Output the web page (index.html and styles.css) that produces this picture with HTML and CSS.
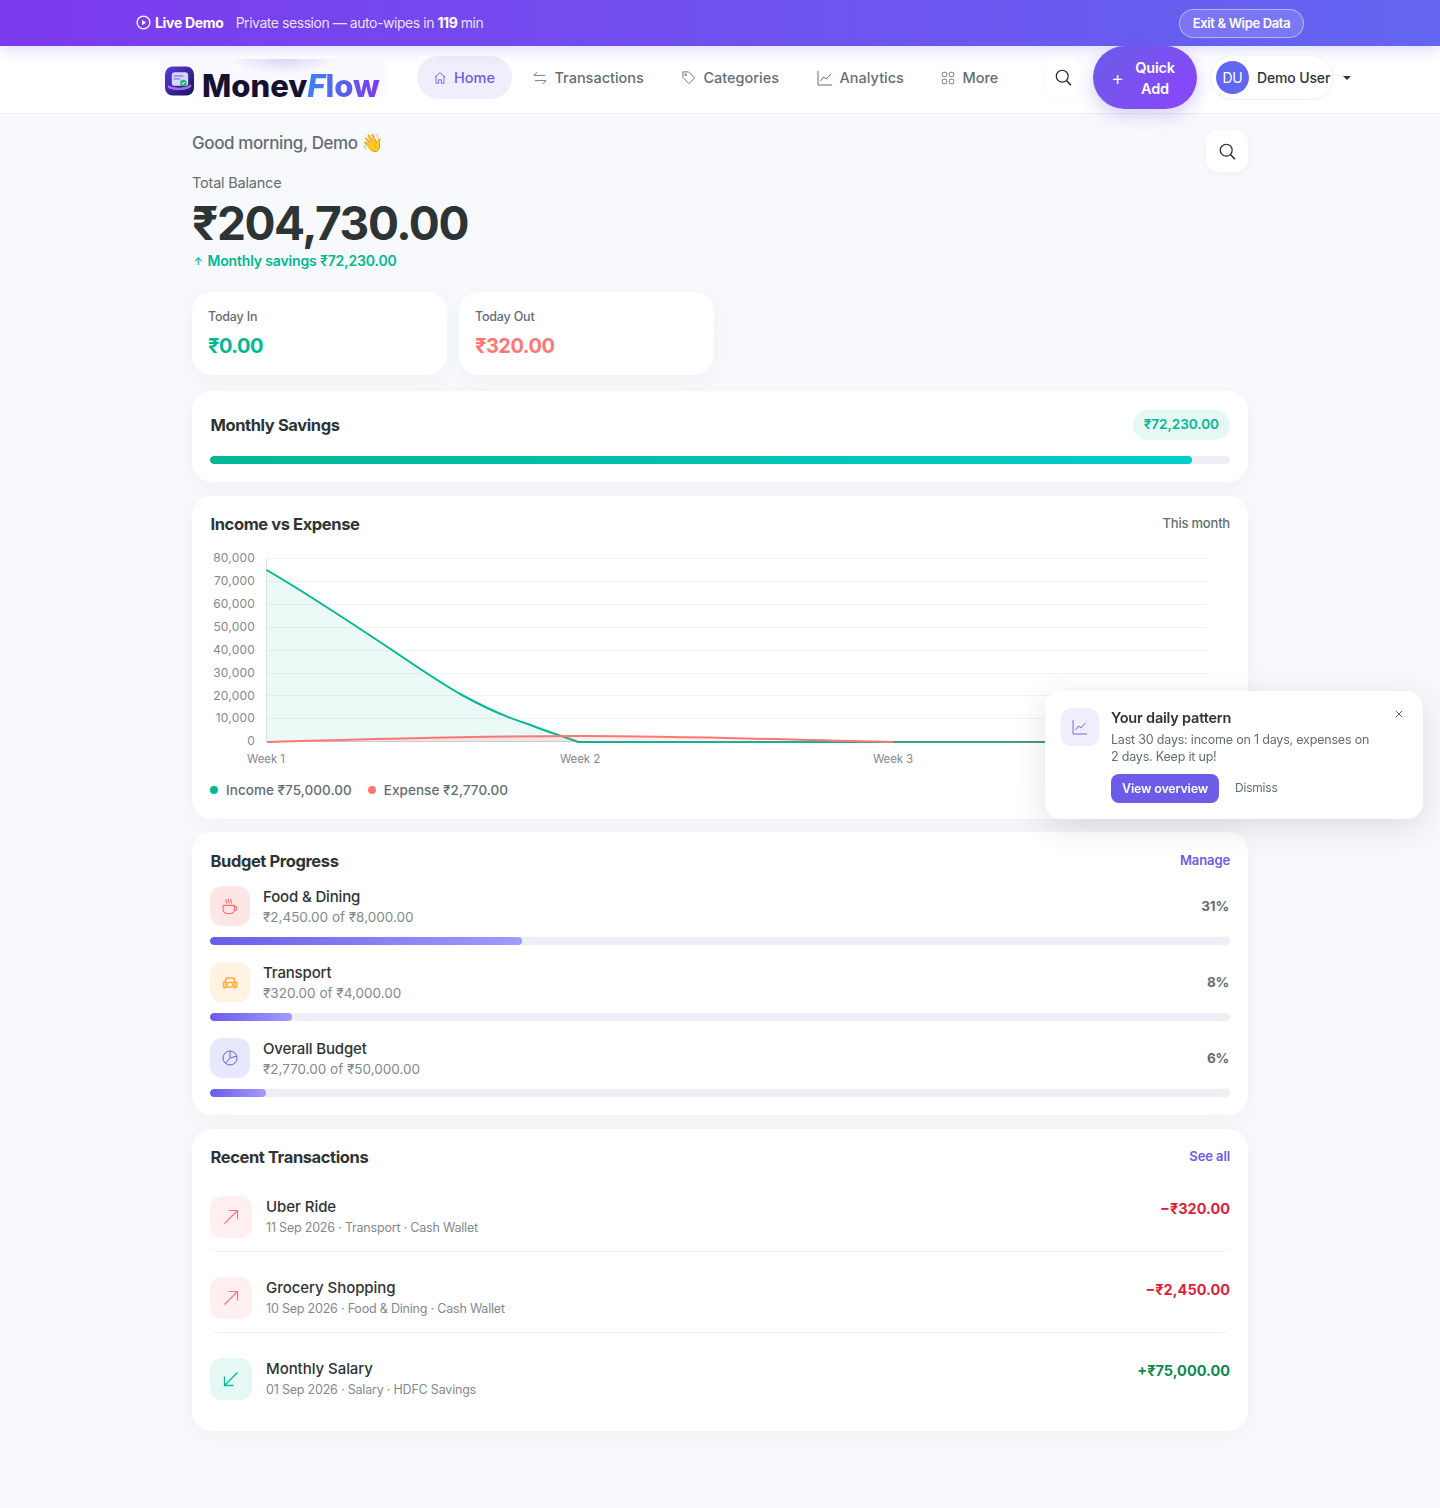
FILE: index.html
```html
<!DOCTYPE html>
<html lang="en">
<head>
    <meta charset="UTF-8">
    <meta name="viewport" content="width=device-width, initial-scale=1.0">
    <title>MoneyFlow</title>
    <link rel="stylesheet" href="styles.css">
</head>
<body>
    <div class="demo-bar">
        <div class="demo-left">
            <svg class="demo-play" viewBox="0 0 16 16" width="15" height="15" fill="none" stroke="#fff" stroke-width="1.4"><circle cx="8" cy="8" r="6.8"/><path d="M6.5 5.2 10.8 8l-4.3 2.8z" fill="#fff" stroke="none"/></svg>
            <strong class="demo-title">Live Demo</strong>
            <span class="demo-text">Private session — auto-wipes in <b>119</b> min</span>
        </div>
        <button class="demo-exit">Exit &amp; Wipe Data</button>
    </div>

    <nav class="topnav">
        <div class="logo">
            <svg class="logo-mark" viewBox="0 0 30 30" width="29" height="30">
                <defs>
                    <linearGradient id="logoBg" x1="0" y1="0" x2="1" y2="1"><stop offset="0" stop-color="#5a3be0"/><stop offset="1" stop-color="#1a1458"/></linearGradient>
                </defs>
                <rect width="30" height="30" rx="8" fill="url(#logoBg)"/>
                <path d="M3 19c4 4 18 4 24-1v3c-3 4-19 5-24 1z" fill="#a36bf0"/>
                <rect x="7" y="6" width="17" height="14" rx="3" fill="#d9d6fb"/>
                <rect x="9" y="9" width="10" height="1.6" fill="#8f86ea"/>
                <rect x="9" y="12" width="7" height="1.6" fill="#8f86ea"/>
                <circle cx="19" cy="17" r="3.4" fill="#22b573"/>
                <path d="M17.4 17l1.2 1.2 2-2.2" stroke="#fff" stroke-width="1" fill="none"/>
            </svg>
            <div class="logo-word">Monev<span class="logo-flow"><i>F</i>low</span></div>
        </div>

        <ul class="nav-links">
            <li class="nav-item active">
                <svg viewBox="0 0 16 16" width="14" height="14" fill="none" stroke="currentColor" stroke-width="1"><path d="M2 7 8 2l6 5M3.500 6v8h3V10h3v4h3V6"/></svg>
                Home
            </li>
            <li class="nav-item">
                <svg viewBox="0 0 16 16" width="14" height="14" fill="none" stroke="currentColor" stroke-width="1"><path d="M1 5h13M5 1 1 5M15 11H2M11 15l4-4"/></svg>
                Transactions
            </li>
            <li class="nav-item">
                <svg viewBox="0 0 16 16" width="15" height="15" fill="none" stroke="currentColor" stroke-width="1"><path d="M2 2h6l6.500 6.500-6 6L2 8z"/><circle cx="5" cy="5" r="1"/></svg>
                Categories
            </li>
            <li class="nav-item">
                <svg viewBox="0 0 16 16" width="16" height="16" fill="none" stroke="currentColor" stroke-width="1"><path d="M1 1v14h14M3.500 11l3-4 3 2 4.500-5"/></svg>
                Analytics
            </li>
            <li class="nav-item">
                <svg viewBox="0 0 16 16" width="14" height="14" fill="none" stroke="currentColor" stroke-width="1"><rect x="1.500" y="1.500" width="5" height="5" rx="1"/><rect x="9.500" y="1.500" width="5" height="5" rx="1"/><rect x="1.500" y="9.500" width="5" height="5" rx="1"/><rect x="9.500" y="9.500" width="5" height="5" rx="1"/></svg>
                More
            </li>
        </ul>

        <div class="nav-right">
            <button class="icon-btn nav-search">
                <svg viewBox="0 0 16 16" width="17" height="17" fill="none" stroke="#212529" stroke-width="1.1"><circle cx="6.800" cy="6.800" r="5.600"/><path d="m11 11 4 4.300" stroke-width="1.400"/></svg>
            </button>
            <button class="quick-add">
                <span class="quick-plus">+</span>
                <span class="quick-label">Quick<br>Add</span>
            </button>
            <div class="user-pill">
                <span class="user-avatar">DU</span>
                <span class="user-name">Demo User</span>
            </div>
            <span class="caret"></span>
        </div>
    </nav>

    <main class="page">
        <div class="hero">
            <div>
                <p class="greeting">Good morning, Demo <span class="wave">👋</span></p>
                <p class="balance-label">Total Balance</p>
                <div class="balance">₹204,730.00</div>
                <p class="savings-note"><span class="up-arrow">↑</span> Monthly savings ₹72,230.00</p>
            </div>
            <button class="icon-btn hero-search">
                <svg viewBox="0 0 16 16" width="17" height="17" fill="none" stroke="#212529" stroke-width="1.1"><circle cx="6.800" cy="6.800" r="5.600"/><path d="m11 11 4 4.300" stroke-width="1.400"/></svg>
            </button>
        </div>

        <div class="today-row">
            <div class="card today-card">
                <div class="today-label">Today In</div>
                <div class="today-value green">₹0.00</div>
            </div>
            <div class="card today-card">
                <div class="today-label">Today Out</div>
                <div class="today-value coral">₹320.00</div>
            </div>
        </div>

        <section class="card savings-card">
            <div class="card-head">
                <h2>Monthly Savings</h2>
                <span class="savings-badge">₹72,230.00</span>
            </div>
            <div class="bar"><div class="bar-fill teal" style="width: 96.300%"></div></div>
        </section>

        <section class="card chart-card">
            <div class="card-head">
                <h2>Income vs Expense</h2>
                <span class="muted-link">This month</span>
            </div>
            <svg class="chart" viewBox="0 -4 1020 229" width="1020" height="229">
                <g class="grid">
                    <path d="M57 6.500H997M57 29.500H997M57 52.500H997M57 75.500H997M57 98.500H997M57 121.500H997M57 143.500H997M57 166.500H997"/>
                </g>
                <path d="M56.500 6V190" stroke="#dfe5e6" fill="none"/>
                <path d="M56.500 18C95 40 140 70 185 100 210 117 232 132 252 143 272 154 295 165 318 172 335 179 352 184 368 190H56.500Z" fill="#00b894" fill-opacity=".08"/>
                <path d="M57 189.500H997" stroke="#cfd3d6" fill="none"/>
                <path d="M56.500 18C95 40 140 70 185 100 210 117 232 132 252 143 272 154 295 165 318 172 335 179 352 184 368 190H997" stroke="#00b894" stroke-width="2" fill="none"/>
                <path d="M57 190C160 187 260 184 370 184 480 184 580 188 683 190V190H57Z" fill="#ff7675" fill-opacity=".12"/>
                <path d="M57 190C160 187 260 184 370 184 480 184 580 188 683 190" stroke="#ff7675" stroke-width="2" fill="none"/>
                <path d="M683 190H997" stroke="#3f9b86" stroke-width="2" fill="none"/>
                <g class="chart-y">
                    <text x="45" y="10">80,000</text>
                    <text x="45" y="33">70,000</text>
                    <text x="45" y="56">60,000</text>
                    <text x="45" y="79">50,000</text>
                    <text x="45" y="102">40,000</text>
                    <text x="45" y="125">30,000</text>
                    <text x="45" y="148">20,000</text>
                    <text x="45" y="170">10,000</text>
                    <text x="45" y="193">0</text>
                </g>
                <g class="chart-x">
                    <text x="56" y="211">Week 1</text>
                    <text x="370" y="211">Week 2</text>
                    <text x="683" y="211">Week 3</text>
                </g>
            </svg>
            <div class="legend">
                <span class="legend-item"><i class="dot dot-green"></i>Income ₹75,000.00</span>
                <span class="legend-item"><i class="dot dot-red"></i>Expense ₹2,770.00</span>
            </div>
        </section>

        <section class="card budget-card">
            <div class="card-head">
                <h2>Budget Progress</h2>
                <a class="card-link">Manage</a>
            </div>

            <div class="budget-item">
                <div class="budget-row">
                    <div class="budget-icon icon-red">
                        <svg viewBox="0 0 16 16" width="20" height="20" fill="none" stroke="#ff6b6b" stroke-width=".85"><path d="M2.500 7.500h9v3.500a3 3 0 0 1-3 3h-3a3 3 0 0 1-3-3zM11.500 8.500h1.200l1 1.500-1 1.500h-1.200M5 2.500q-.6 1 0 2t0 1.500M7 2.500q-.6 1 0 2t0 1.500M9 2.500q-.6 1 0 2t0 1.500"/></svg>
                    </div>
                    <div class="budget-text">
                        <div class="budget-name">Food &amp; Dining</div>
                        <div class="budget-sub">₹2,450.00 of ₹8,000.00</div>
                    </div>
                    <div class="budget-pct">31%</div>
                </div>
                <div class="bar bar-budget"><div class="bar-fill purple" style="width: 30.600%"></div></div>
            </div>

            <div class="budget-item">
                <div class="budget-row">
                    <div class="budget-icon icon-orange">
                        <svg viewBox="0 0 16 16" width="16" height="16" fill="none" stroke="#fdab3d" stroke-width="1.500"><path d="M1.500 8.500h13V13h-13zM3 8l1.300-4h7.400L13 8M3 13v1.500M13 13v1.500"/><circle cx="4.500" cy="10.700" r=".7" fill="#fdab3d"/><circle cx="11.500" cy="10.700" r=".7" fill="#fdab3d"/></svg>
                    </div>
                    <div class="budget-text">
                        <div class="budget-name">Transport</div>
                        <div class="budget-sub">₹320.00 of ₹4,000.00</div>
                    </div>
                    <div class="budget-pct">8%</div>
                </div>
                <div class="bar bar-budget"><div class="bar-fill purple" style="width: 8%"></div></div>
            </div>

            <div class="budget-item">
                <div class="budget-row">
                    <div class="budget-icon icon-indigo">
                        <svg viewBox="0 0 16 16" width="16" height="16" fill="none" stroke="#6c5ce7" stroke-width="1"><circle cx="8" cy="8" r="7"/><path d="M8 1v7l6.400 -1.800M8 8l-4.500 5.300"/></svg>
                    </div>
                    <div class="budget-text">
                        <div class="budget-name">Overall Budget</div>
                        <div class="budget-sub">₹2,770.00 of ₹50,000.00</div>
                    </div>
                    <div class="budget-pct">6%</div>
                </div>
                <div class="bar bar-budget"><div class="bar-fill purple" style="width: 5.500%"></div></div>
            </div>
        </section>

        <section class="card recent-card">
            <div class="card-head">
                <h2>Recent Transactions</h2>
                <a class="card-link">See all</a>
            </div>

            <div class="txn-list">
                <div class="txn">
                    <div class="txn-icon txn-out">
                        <svg viewBox="0 0 16 16" width="16" height="16" fill="none" stroke="#ff7675" stroke-width="1.200"><path d="M1.500 14.500 14.500 1.500M5.500 1.500h9v9"/></svg>
                    </div>
                    <div class="txn-text">
                        <div class="txn-name">Uber Ride</div>
                        <div class="txn-sub">11 Sep 2026 · Transport · Cash Wallet</div>
                    </div>
                    <div class="txn-amount amount-out">−₹320.00</div>
                </div>

                <div class="txn">
                    <div class="txn-icon txn-out">
                        <svg viewBox="0 0 16 16" width="16" height="16" fill="none" stroke="#ff7675" stroke-width="1.200"><path d="M1.500 14.500 14.500 1.500M5.500 1.500h9v9"/></svg>
                    </div>
                    <div class="txn-text">
                        <div class="txn-name">Grocery Shopping</div>
                        <div class="txn-sub">10 Sep 2026 · Food &amp; Dining · Cash Wallet</div>
                    </div>
                    <div class="txn-amount amount-out">−₹2,450.00</div>
                </div>

                <div class="txn">
                    <div class="txn-icon txn-in">
                        <svg viewBox="0 0 16 16" width="16" height="16" fill="none" stroke="#00b894" stroke-width="1.300"><path d="M14.500 1.500 1.500 14.500M10.500 14.500h-9v-9"/></svg>
                    </div>
                    <div class="txn-text">
                        <div class="txn-name">Monthly Salary</div>
                        <div class="txn-sub">01 Sep 2026 · Salary · HDFC Savings</div>
                    </div>
                    <div class="txn-amount amount-in">+₹75,000.00</div>
                </div>
            </div>
        </section>
    </main>

    <aside class="insight">
        <div class="insight-icon">
            <svg viewBox="0 0 16 16" width="16" height="16" fill="none" stroke="#6c5ce7" stroke-width=".9"><path d="M1 1v14h14M3.500 11l3-4 2.500 2 4.500-5"/></svg>
        </div>
        <div class="insight-body">
            <h3>Your daily pattern</h3>
            <p>Last 30 days: income on 1 days, expenses on 2 days. Keep it up!</p>
            <div class="insight-actions">
                <button class="btn-view">View overview</button>
                <button class="btn-dismiss">Dismiss</button>
            </div>
        </div>
        <svg class="insight-close" viewBox="0 0 10 10" width="8" height="8" fill="none" stroke="#495057" stroke-width="1.100"><path d="M1 1l8 8M9 1 1 9"/></svg>
    </aside>
</body>
</html>
```

FILE: styles.css
```css
* {
    box-sizing: border-box;
}
body {
    margin: 0;
    background: #f8f9fc;
    color: #2d3436;
    font-family: Inter, "Noto Sans", sans-serif;
    letter-spacing: -0.2px;
}
button {
    font-family: inherit;
    letter-spacing: inherit;
}
h2, h3, p {
    margin: 0;
}

/* demo bar */
.demo-bar {
    height: 46px;
    display: flex;
    align-items: center;
    justify-content: space-between;
    padding: 0 136px;
    background: linear-gradient(90deg, #7c3aed, #6366f1);
    color: #fff;
    position: relative;
    z-index: 2;
    box-shadow: 0 4px 14px rgba(99, 102, 241, 0.22);
}
.demo-left {
    display: flex;
    align-items: center;
    font-size: 14px;
    margin-top: -2px;
}
.demo-play {
    margin-right: 4px;
}
.demo-title {
    font-weight: 700;
    margin-right: 12px;
    letter-spacing: -0.3px;
}
.demo-text {
    color: rgba(255, 255, 255, 0.86);
    letter-spacing: -0.45px;
}
.demo-text b {
    color: #fff;
}
.demo-exit {
    height: 29px;
    width: 125px;
    border-radius: 15px;
    border: 1px solid rgba(255, 255, 255, 0.45);
    background: rgba(255, 255, 255, 0.14);
    color: #fff;
    font-size: 13px;
    font-weight: 600;
    letter-spacing: -0.35px;
    padding: 0;
}

/* top nav */
.topnav {
    height: 68px;
    display: flex;
    align-items: center;
    background: #fff;
    border-bottom: 1px solid #eceef3;
    padding: 0 89px 4px 160px;
}
.logo {
    width: 225px;
    height: 38px;
    padding: 7px 0 0 5px;
    display: flex;
    align-items: flex-start;
    gap: 8px;
    background: radial-gradient(ellipse 50px 16px at 123px 0, #dcd8f8, rgba(220, 216, 248, 0) 100%), #faf9ff;
}
.logo-mark {
    flex: none;
}
.logo-word {
    font-size: 31px;
    line-height: 38px;
    font-weight: 800;
    color: #14122e;
    letter-spacing: 0;
    white-space: nowrap;
    margin-top: 1px;
}
.logo-flow {
    background: linear-gradient(90deg, #3b82f6, #7c3aed);
    -webkit-background-clip: text;
    background-clip: text;
    color: transparent;
}
.logo-flow i {
    font-style: italic;
}
.nav-links {
    list-style: none;
    display: flex;
    align-items: center;
    margin: 0 0 0 32px;
    padding: 0;
    gap: 5.500px;
    height: 43px;
}
.nav-item {
    display: flex;
    align-items: center;
    gap: 7px;
    height: 43px;
    padding: 0 16px;
    font-size: 14.500px;
    font-weight: 500;
    color: #636e72;
    letter-spacing: 0;
}
.nav-item.active {
    background: #f0edfd;
    color: #6c5ce7;
    border-radius: 22px;
    padding-right: 17px;
}
.nav-right {
    display: flex;
    align-items: center;
    margin-left: auto;
    height: 63px;
    position: relative;
    z-index: 3;
}
.icon-btn {
    background: #fff;
    border: none;
    border-radius: 12px;
    display: flex;
    align-items: center;
    justify-content: center;
    padding: 0;
}
.nav-search {
    width: 36px;
    height: 42px;
    box-shadow: 0 1px 6px rgba(0, 0, 0, 0.03);
}
.quick-add {
    width: 104px;
    height: 63px;
    margin-left: 12px;
    border: none;
    border-radius: 32px;
    background: linear-gradient(135deg, #6c5ce7, #8b45fb);
    color: #fff;
    display: flex;
    align-items: center;
    box-shadow: 0 6px 18px rgba(108, 92, 231, 0.3);
    padding: 0 0 0 18px;
}
.quick-plus {
    font-size: 20px;
    font-weight: 300;
    line-height: 20px;
    width: 13px;
}
.quick-label {
    font-size: 14.500px;
    font-weight: 600;
    line-height: 21px;
    width: 60px;
    margin-left: 1px;
    text-align: center;
}
.user-pill {
    width: 124px;
    height: 45px;
    margin-left: 13px;
    border: 1px solid #eef0f4;
    border-radius: 23px;
    display: flex;
    align-items: center;
    padding-left: 5px;
    background: #fff;
}
.user-avatar {
    width: 33px;
    height: 33px;
    border-radius: 50%;
    background: #6366f1;
    color: #fff;
    font-size: 14px;
    display: flex;
    align-items: center;
    justify-content: center;
    flex: none;
}
.user-name {
    font-size: 14px;
    font-weight: 500;
    color: #2d3436;
    margin-left: 8px;
    white-space: nowrap;
    letter-spacing: -0.15px;
}
.caret {
    width: 0;
    height: 0;
    margin-left: 9px;
    border-left: 4px solid transparent;
    border-right: 4px solid transparent;
    border-top: 4px solid #2d3436;
}

/* page */
.page {
    width: 1056px;
    margin: 0 0 0 192px;
    padding-bottom: 77px;
}
.hero {
    display: flex;
    justify-content: space-between;
    align-items: flex-start;
    padding-top: 16px;
}
.greeting {
    font-size: 17px;
    line-height: 26px;
    color: #636e72;
    font-weight: 500;
    letter-spacing: -0.4px;
}
.wave {
    font-size: 18px;
    line-height: 20px;
    margin-left: -1px;
}
.balance-label {
    margin-top: 17px;
    font-size: 14.500px;
    line-height: 20px;
    color: #636e72;
}
.balance {
    font-size: 46px;
    line-height: 56px;
    font-weight: 700;
    color: #2d3436;
    margin-top: 2px;
    letter-spacing: -1.4px;
}
.savings-note {
    margin-top: 0;
    font-size: 14px;
    line-height: 20px;
    font-weight: 600;
    color: #00b894;
    letter-spacing: -0.15px;
}
.up-arrow {
    font-size: 10px;
    display: inline-block;
    width: 12px;
    text-align: center;
    vertical-align: 1px;
}
.hero-search {
    width: 42px;
    height: 42px;
    box-shadow: 0 2px 8px rgba(0, 0, 0, 0.04);
}
.card {
    background: #fff;
    border-radius: 20px;
    box-shadow: 0 4px 20px rgba(45, 52, 54, 0.04);
}
.today-row {
    display: flex;
    gap: 12px;
    margin-top: 21px;
}
.today-card {
    width: 255px;
    height: 83px;
    padding: 16px;
}
.today-label {
    font-size: 12.500px;
    line-height: 18px;
    font-weight: 500;
    color: #636e72;
}
.today-value {
    font-size: 20px;
    line-height: 26px;
    font-weight: 700;
    margin-top: 7px;
    letter-spacing: -0.5px;
}
.green {
    color: #00b894;
}
.coral {
    color: #ff7675;
}
.card-head {
    display: flex;
    justify-content: space-between;
    align-items: center;
}
h2 {
    font-size: 16.500px;
    line-height: 24px;
    font-weight: 700;
    color: #2d3436;
    letter-spacing: -0.4px;
    margin-left: 0.5px;
}
.savings-card {
    margin-top: 16px;
    height: 91px;
    padding: 19px 18px 0;
}
.savings-badge {
    background: #e6f8f4;
    color: #00b894;
    font-size: 13.500px;
    font-weight: 600;
    padding: 0 11px;
    height: 30px;
    line-height: 28px;
    border-radius: 15px;
    letter-spacing: 0;
}
.bar {
    height: 8px;
    background: #eeeef4;
    border-radius: 4px;
    overflow: hidden;
}
.savings-card .bar {
    margin-top: 16px;
}
.bar-fill {
    height: 100%;
    border-radius: 4px;
}
.teal {
    background: linear-gradient(90deg, #00b894, #00cec9);
}
.purple {
    background: linear-gradient(90deg, #6c5ce7, #a29bfe);
}
.chart-card {
    margin-top: 14px;
    height: 323px;
    padding: 16px 18px 0;
}
.muted-link {
    font-size: 13px;
    color: #636e72;
    font-weight: 500;
    margin-top: -2px;
}
.chart {
    display: block;
    margin-top: 12px;
}
.grid path {
    stroke: #f2f3f5;
    fill: none;
}
.chart-y text {
    font-size: 12px;
    fill: #7f8a8e;
    text-anchor: end;
    letter-spacing: 0.2px;
}
.chart-x text {
    font-size: 11.500px;
    fill: #7f8a8e;
    text-anchor: middle;
    letter-spacing: -0.1px;
}
.legend {
    display: flex;
    gap: 16px;
    margin-top: 5px;
    font-size: 13.500px;
    font-weight: 500;
    color: #636e72;
    letter-spacing: 0.05px;
}
.legend-item {
    display: flex;
    align-items: center;
}
.dot {
    width: 8px;
    height: 8px;
    border-radius: 50%;
    margin-right: 8px;
}
.dot-green {
    background: #00b894;
}
.dot-red {
    background: #ff7675;
}
.budget-card {
    margin-top: 13px;
    height: 283px;
    padding: 17px 18px 0;
}
.card-link {
    font-size: 13px;
    font-weight: 600;
    color: #6c5ce7;
    letter-spacing: -0.1px;
    margin-top: -2px;
}
.budget-item {
    margin-top: 13px;
}
.budget-item + .budget-item {
    margin-top: 17px;
}
.budget-row {
    display: flex;
    align-items: center;
    height: 40px;
}
.budget-icon {
    width: 40px;
    height: 40px;
    border-radius: 12px;
    display: flex;
    align-items: center;
    justify-content: center;
    flex: none;
}
.icon-red {
    background: #ffe5e6;
}
.icon-orange {
    background: #fff2e0;
}
.icon-indigo {
    background: #e8e8fd;
}
.budget-text {
    margin-left: 13px;
    margin-top: 2px;
    flex: 1;
}
.budget-name {
    font-size: 15px;
    line-height: 20px;
    font-weight: 500;
    color: #2d3436;
    letter-spacing: -0.15px;
}
.budget-sub {
    font-size: 13.500px;
    line-height: 20px;
    color: #7f8a8e;
    letter-spacing: 0;
}
.budget-pct {
    font-size: 13.500px;
    font-weight: 700;
    color: #636e72;
    margin-right: 1px;
}
.bar-budget {
    margin-top: 11px;
}
.recent-card {
    margin-top: 14px;
    height: 302px;
    padding: 16px 18px 0;
}
.txn-list {
    margin: 2px -5px 0;
}
.txn {
    display: flex;
    align-items: flex-start;
    height: 81px;
    padding: 25px 5px 0;
    border-bottom: 1px solid #eef0f4;
    border-radius: 0 0 14px 14px;
}
.txn:last-child {
    border-bottom: none;
}
.txn-icon {
    width: 42px;
    height: 42px;
    border-radius: 12px;
    display: flex;
    align-items: center;
    justify-content: center;
    flex: none;
}
.txn-out {
    background: #ffeff0;
}
.txn-in {
    background: #e6f8f4;
}
.txn-text {
    flex: 1;
    margin-left: 14px;
}
.txn-name {
    font-size: 15px;
    line-height: 21px;
    font-weight: 500;
    color: #2d3436;
    letter-spacing: -0.05px;
}
.txn-sub {
    font-size: 12.500px;
    line-height: 20px;
    color: #7f8a8e;
    margin-top: 1px;
}
.txn-amount {
    font-size: 14.500px;
    font-weight: 700;
    margin-top: 4px;
    letter-spacing: 0;
}
.amount-out {
    color: #e01e3c;
}
.amount-in {
    color: #0d8a4e;
}

/* insight popup */
.insight {
    position: fixed;
    left: 1045px;
    top: 691px;
    width: 378px;
    height: 128px;
    background: #fff;
    border-radius: 16px;
    box-shadow: 0 8px 32px rgba(45, 52, 54, 0.14);
    padding: 17px 16px;
    display: flex;
    z-index: 5;
}
.insight-icon {
    width: 38px;
    height: 38px;
    border-radius: 10px;
    background: #f0edfd;
    display: flex;
    align-items: center;
    justify-content: center;
    flex: none;
}
.insight-body {
    margin-left: 12px;
}
.insight-body h3 {
    font-size: 14.500px;
    line-height: 20px;
    font-weight: 600;
    color: #2d3436;
}
.insight-body p {
    font-size: 12.500px;
    line-height: 17px;
    color: #636e72;
    width: 262px;
    margin-top: 3px;
}
.insight-actions {
    display: flex;
    align-items: center;
    margin-top: 9px;
}
.btn-view {
    width: 108px;
    height: 29px;
    background: #6c5ce7;
    color: #fff;
    border: none;
    border-radius: 8px;
    font-size: 12.500px;
    font-weight: 600;
    padding: 0;
}
.btn-dismiss {
    background: none;
    border: none;
    color: #636e72;
    font-size: 12px;
    padding: 0 0 2px;
    margin-left: 16px;
}
.insight-close {
    position: absolute;
    top: 19px;
    right: 20px;
}
```
